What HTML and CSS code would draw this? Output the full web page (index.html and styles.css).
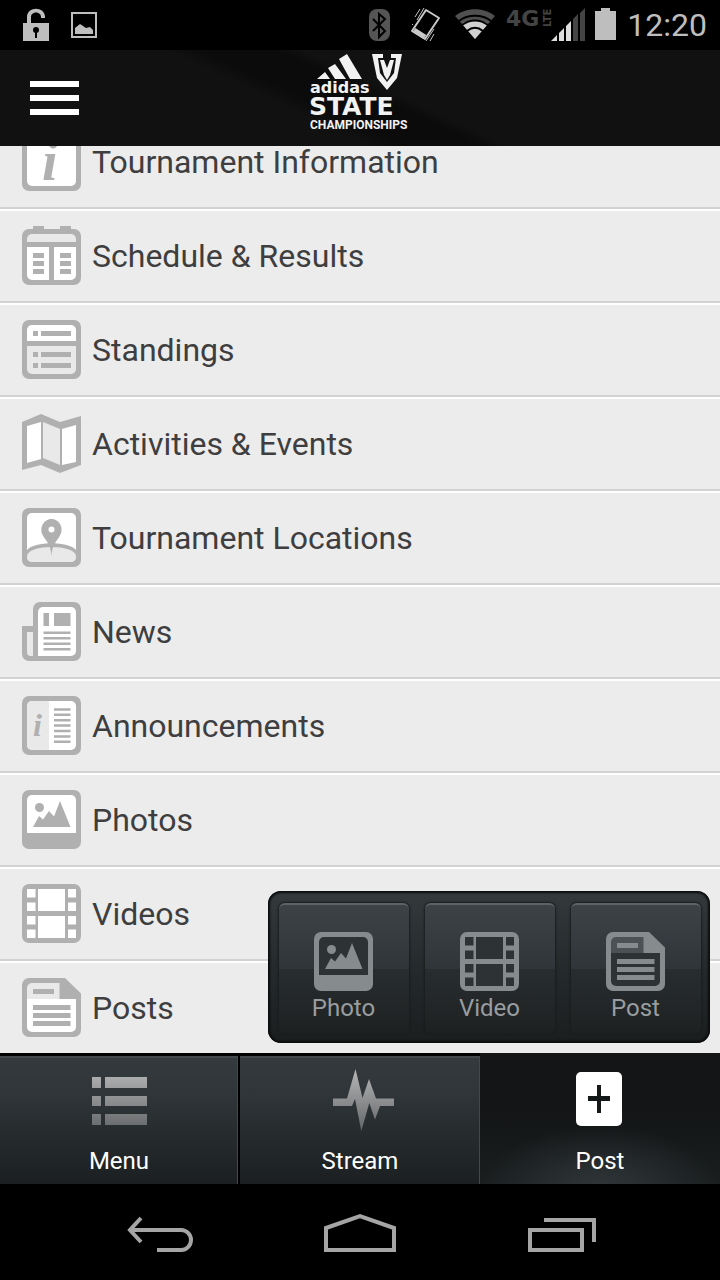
FILE: index.html
```html
<!DOCTYPE html>
<html lang="en">
<head>
<meta charset="utf-8">
<meta name="viewport" content="width=device-width, initial-scale=1">
<title>adidas State Championships</title>
<link rel="stylesheet" href="styles.css">
</head>
<body>
<svg class="sprite" aria-hidden="true">
  <symbol id="i-info" viewBox="0 0 59 59">
    <rect class="fg" width="59" height="59" rx="7"/><rect class="p1" x="5" y="5" width="49" height="49" rx="5"/>
    <text class="fg serif" x="20" y="48" font-size="56">i</text>
  </symbol>
  <symbol id="i-schedule" viewBox="0 0 59 59">
    <path class="fg" d="M11 0h11v3h16V0h11v3h3a7 7 0 0 1 7 7v42a7 7 0 0 1-7 7H7a7 7 0 0 1-7-7V10a7 7 0 0 1 7-7h4z"/>
    <path class="p2" d="M5 16v-3a5 5 0 0 1 5-5h39a5 5 0 0 1 5 5v3z"/>
    <path class="p1" d="M5 21h22v33H10a5 5 0 0 1-5-5zM32 21h22v28a5 5 0 0 1-5 5H32z"/>
    <path class="fg" d="M11 27h11v5H11zm0 8h11v5H11zm0 8h11v5H11zM38 27h11v5H38zm0 8h11v5H38zm0 8h11v5H38z"/>
  </symbol>
  <symbol id="i-standings" viewBox="0 0 59 59">
    <rect class="fg" width="59" height="59" rx="7"/>
    <path class="p1" d="M5 21V10a5 5 0 0 1 5-5h39a5 5 0 0 1 5 5v11z"/>
    <path class="p2" d="M5 26h49v23a5 5 0 0 1-5 5H10a5 5 0 0 1-5-5z"/>
    <path class="fg" d="M11 11h5v5h-5zm8 0h30v5H19zM11 32h5v5h-5zm8 0h30v5H19zM11 43h5v5h-5zm8 0h30v5H19z"/>
  </symbol>
  <symbol id="i-map" viewBox="0 0 59 59">
    <path class="fg" d="M0 8 19 0 38 8 59 2v49l-21 8-19-8-19 5z"/>
    <path class="p1" d="M5 12l14-4v37L5 49zM40 15l14-4v37l-14 3z"/>
    <path class="p2" d="M21 8l17 7v36l-17-7z"/>
  </symbol>
  <symbol id="i-location" viewBox="0 0 59 59">
    <rect class="fg" width="59" height="59" rx="7"/><rect class="p1" x="5" y="5" width="49" height="49" rx="5"/>
    <path class="fg" d="M5 42c7-9 42-9 49 0v8H5z"/>
    <path class="p2" d="M5 48c1-12 48-12 49 0v1a5 5 0 0 1-5 5H10a5 5 0 0 1-5-5z"/>
    <path class="fg" d="M29.500 48c-1-11-3-12-7-18-7-9-1-19 7-19s14 10 7 19c-4 6-6 7-7 18z"/><circle class="p1" cx="29.500" cy="21.500" r="3"/>
  </symbol>
  <symbol id="i-news" viewBox="0 0 59 59">
    <path class="fg" d="M11 24V7a7 7 0 0 1 7-7h34a7 7 0 0 1 7 7v45a7 7 0 0 1-7 7H7a7 7 0 0 1-7-7V24z"/>
    <path class="p2" d="M5 30h6v24H9a4 4 0 0 1-4-4z"/>
    <path class="p1" d="M16 54V10a5 5 0 0 1 5-5h28a5 5 0 0 1 5 5v39a5 5 0 0 1-5 5z"/>
    <path class="fg" d="M21.500 11H27v13h-5.500zM32 11h16.500v13H32zM21.500 29.500h27V32h-27zm0 5.500h27v2.500h-27zm0 5.500h27V43h-27zm0 5.500h27v2.500h-27z"/>
  </symbol>
  <symbol id="i-announce" viewBox="0 0 59 59">
    <rect class="fg" width="59" height="59" rx="7"/><rect class="p1" x="5" y="5" width="49" height="49" rx="5"/>
    <path class="p2" d="M27 5v49H10a5 5 0 0 1-5-5V10a5 5 0 0 1 5-5z"/>
    <text class="fg serif" x="11" y="40" font-size="32">i</text>
    <path class="lines" d="M32 13.500h16.500M32 18.800h16.500M32 24.200h16.500M32 29.600h16.500M32 35h16.500M32 40.400h16.500M32 45.800h16.500"/>
  </symbol>
  <symbol id="i-photo" viewBox="0 0 59 59">
    <rect class="fg" width="59" height="59" rx="7"/>
    <path class="p1" d="M5 43V10a5 5 0 0 1 5-5h39a5 5 0 0 1 5 5v33z"/>
    <circle class="fg" cx="17.500" cy="17.500" r="4.500"/>
    <path class="fg" d="M11 37l6-11 4 3.500L27 21l5 5.500L38 11l10.500 26z"/>
  </symbol>
  <symbol id="i-video" viewBox="0 0 59 59">
    <rect class="fg" width="59" height="59" rx="7"/>
    <path class="p1" d="M5 5h8.500v8.500H5zM5 18.500h8.500V27H5zM5 32h8.500v8.500H5zM5 45.500h8.500V54H5zM46 5h8v8.500h-8zM46 18.500h8V27h-8zM46 32h8v8.500h-8zM46 45.500h8V54h-8zM16 5h27v22H16zM16 32h27v22H16z"/>
  </symbol>
  <symbol id="i-post" viewBox="0 0 59 59">
    <path class="fg" d="M7 0h36l16 15.500V52a7 7 0 0 1-7 7H7a7 7 0 0 1-7-7V7a7 7 0 0 1 7-7z"/>
    <path class="p2" d="M10 5h27.500v16H5V10a5 5 0 0 1 5-5z"/>
    <path class="p1" d="M5 21h49v28a5 5 0 0 1-5 5H10a5 5 0 0 1-5-5z"/>
    <path class="fg" d="M11 11h21v5H11zM11 27h37.500v5H11zm0 8h37.500v5H11zm0 8h37.500v5H11z"/>
  </symbol>
</svg>

<div class="screen">
  <div class="status">
    <svg width="26" height="50" viewBox="0 0 26 50"><path d="M0 23h4v-6C4 6 22 6 22 17v1h-4v-1c0-6-10-6-10 0v6h18v18H0z" fill="#bebebe"/><circle cx="13" cy="30" r="3" fill="#000"/><path d="M12 31h2v7h-2z" fill="#000"/></svg>
    <svg width="26" height="50" viewBox="0 0 26 50"><rect x="1" y="13" width="24" height="24" fill="none" stroke="#bebebe" stroke-width="2"/><path d="M4 34v-6l5-4 6 4 4-1 3 3v4z" fill="#bebebe"/></svg>
    <div class="status-right">
      <svg width="22" height="50" viewBox="0 0 22 50"><rect y="9" width="21" height="32" rx="8" fill="#555"/><path d="M4 19l12 12-6 6V14l6 5L4 31" fill="none" stroke="#000" stroke-width="2"/></svg>
      <svg width="44" height="50" viewBox="0 0 44 50"><g fill="none" stroke="#c8c8c8"><path d="M25 10l13 8-14 21-13-8z" stroke-width="2" stroke-linejoin="round"/><path d="M13 30l11 7" stroke-width="5"/><path d="M14 17l5-8M16 20l7-12M12 24l-1 1M25 41l8-12M29 41l4-7" stroke-width="1"/></g></svg>
      <svg width="40" height="50" viewBox="0 0 40 50"><path d="M20 39 0 16c11-9 29-9 40 0z" fill="#505050"/><path d="M20 39 7 24c8-5 18-5 26 0z" fill="#d0d0d0"/><path d="M4 21c9-7 23-7 32 0M7 25c8-6 18-6 26 0M12 31c5-4 11-4 16 0" fill="none" stroke="#000" stroke-width="2"/></svg>
      <svg width="80" height="50" viewBox="0 0 80 50" role="img" aria-label="4G LTE signal"><text class="net" x="1" y="26" font-size="22">4G</text><text class="net" transform="translate(46 27) rotate(-90)" font-size="10">LTE</text><path d="M46 41l6-6v6zM54 33l5-5v13h-5zM61 26l5-5v20h-5z" fill="#dedede"/><path d="M68 19l5-5v27h-5zM75 13l5-5v33h-5z" fill="#444"/></svg>
      <svg width="22" height="50" viewBox="0 0 22 50"><path d="M0 11h6V8h9v3h6v29H0z" fill="#bebebe"/></svg>
      <span class="clock">12:20</span>
    </div>
  </div>

  <header class="header">
    <button class="burger" aria-label="Open menu"><span></span><span></span><span></span></button>
    <svg class="logo" width="104" height="96" viewBox="0 0 104 96" role="img" aria-label="adidas State Championships">
      <g fill="#f2f2f2">
        <path d="M9 29l8-7 5 7zM20 18l7-4 11 15H27zM31 9l8-5 15 25H42z"/>
        <path d="M64 4h11v4h-5l2 15 7 9 7-9 2-15h-5V4h11l-5 24-10 12-10-12z"/>
        <path d="M72 10h4l3 8 3-8h4l-4 15-3 5-3-5z"/>
        <text class="brand" x="2" y="43" font-size="16">adidas</text>
        <text class="brand" x="1" y="65" font-size="25">STATE</text>
        <text class="caps" x="2" y="79" font-size="12">CHAMPIONSHIPS</text>
      </g>
    </svg>
  </header>

  <main class="content">
    <nav class="list" aria-label="Sections">
      <a class="row" href="#info"><svg class="icon"><use href="#i-info"/></svg>Tournament Information</a>
      <a class="row" href="#schedule"><svg class="icon"><use href="#i-schedule"/></svg>Schedule &amp; Results</a>
      <a class="row" href="#standings"><svg class="icon"><use href="#i-standings"/></svg>Standings</a>
      <a class="row" href="#activities"><svg class="icon"><use href="#i-map"/></svg>Activities &amp; Events</a>
      <a class="row" href="#locations"><svg class="icon"><use href="#i-location"/></svg>Tournament Locations</a>
      <a class="row" href="#news"><svg class="icon"><use href="#i-news"/></svg>News</a>
      <a class="row" href="#announcements"><svg class="icon"><use href="#i-announce"/></svg>Announcements</a>
      <a class="row" href="#photos"><svg class="icon"><use href="#i-photo"/></svg>Photos</a>
      <a class="row" href="#videos"><svg class="icon"><use href="#i-video"/></svg>Videos</a>
      <a class="row" href="#posts"><svg class="icon"><use href="#i-post"/></svg>Posts</a>
    </nav>
    <div class="popup">
      <button class="action"><svg class="icon"><use href="#i-photo"/></svg>Photo</button>
      <button class="action"><svg class="icon"><use href="#i-video"/></svg>Video</button>
      <button class="action"><svg class="icon"><use href="#i-post"/></svg>Post</button>
    </div>
  </main>

  <div class="tabs">
    <button class="tab">
      <svg width="64" height="64" viewBox="0 0 64 64"><defs><linearGradient id="fade" gradientUnits="userSpaceOnUse" x1="0" y1="2" x2="0" y2="60"><stop offset="0" stop-color="#b4b4b5"/><stop offset="1" stop-color="#66696b"/></linearGradient></defs><path fill="url(#fade)" d="M5 8h9v11H5zm13 0h42v11H18zM5 27h9v10H5zm13 0h42v10H18zM5 45h9v11H5zm13 0h42v11H18z"/></svg>
      Menu
    </button>
    <button class="tab">
      <svg width="64" height="64" viewBox="0 0 64 64"><path fill="url(#fade)" d="M5 29.500h14L27.500 0l7 29L41 10l7 19.500h18V37H52l-5 13.500L41.300 34l-8 28L27 30l-3 7H5z"/></svg>
      Stream
    </button>
    <button class="tab active" aria-pressed="true">
      <svg width="64" height="64" viewBox="0 0 64 64"><rect x="8" y="3" width="46" height="54" rx="5" fill="#fff"/><path d="M29 16h4v11h9v5h-9v12h-4V32h-9v-5h9z" fill="#151819"/></svg>
      Post
    </button>
  </div>

  <div class="system">
    <button aria-label="Back"><svg width="72" height="40" viewBox="0 0 72 40"><path d="M17 5 6 17l11 12M5 17h52a10 10 0 0 1 0 20H33"/></svg></button>
    <button aria-label="Home"><svg width="72" height="40" viewBox="0 0 72 40"><path d="M2 15 36 3l34 12v22H2z"/></svg></button>
    <button aria-label="Recent apps"><svg width="72" height="40" viewBox="0 0 72 40"><path d="M6 17h52v20H6zM20 7h50v22"/></svg></button>
  </div>
</div>
</body>
</html>
```
FILE: styles.css
```css
* { box-sizing: border-box; }
body { margin: 0; background: #000; font-family: Roboto, "Noto Sans", sans-serif; }
button { margin: 0; padding: 0; border: 0; background: none; color: inherit; font: inherit; cursor: pointer; }
svg { display: block; flex: none; overflow: visible; }
.sprite { position: absolute; width: 0; height: 0; }
.screen { display: flex; flex-direction: column; height: 100vh; overflow: hidden; }

.status { flex: none; display: flex; align-items: center; gap: 22px; height: 50px; padding: 0 13px 0 23px; background: #000; }
.status-right { display: flex; align-items: center; gap: 10px; margin-left: auto; }
.clock { color: #bebebe; font-size: 32px; line-height: 50px; }
.net { fill: #444; font-family: "DejaVu Sans", sans-serif; font-weight: bold; }

.header {
  flex: none; display: grid; grid-template-columns: 1fr auto 1fr; align-items: center; height: 96px; padding: 0 30px;
  background: linear-gradient(205deg, transparent 45%, #0b0b0b 48%, #0b0b0b 56%, transparent 60%), #111;
}
.burger { display: grid; gap: 8px; width: 49px; }
.burger span { height: 6px; background: #fff; }
.brand { font-family: "DejaVu Sans", sans-serif; font-weight: bold; }
.caps { font-family: Roboto, sans-serif; font-weight: bold; }

.content { position: relative; flex: 1; min-height: 0; }
.list { display: flex; flex-direction: column; justify-content: flex-end; height: 100%; overflow: hidden; background: #ececec; }
.row {
  flex: none; display: flex; align-items: center; gap: 11px; height: 94px; padding: 0 22px 1px;
  border-top: 2px solid #fff; border-bottom: 2px solid #d2d2d2;
  color: #3e3e40; font-size: 32px; text-decoration: none;
}
.row:last-child { height: 92px; border-bottom: 0; }
.icon { width: 59px; height: 59px; --fg: #b0b0b0; --p1: #fff; --p2: #e9e9e9; }
.fg { fill: var(--fg); }
.p1 { fill: var(--p1); }
.p2 { fill: var(--p2); }
.lines { stroke: var(--fg); stroke-width: 2.5; }
.serif { font-family: "Liberation Serif", serif; font-style: italic; font-weight: bold; }

.popup {
  position: absolute; right: 10px; bottom: 10px; display: flex; gap: 16px; padding: 12px 9px 10px 11px;
  border-radius: 13px; background: linear-gradient(#34393c, #252a2c 50%, #1b1e1f);
  box-shadow: inset 0 0 2px 2px #0b0d0e;
}
.action {
  display: flex; flex-direction: column; align-items: center; gap: 2px; width: 130px; height: 130px; padding: 27px 1px 0 0;
  border-top: 2px solid #5c6265; border-radius: 6px;
  background: linear-gradient(#3c4245, #2f3538 50%, #282d2f 50%, #1e2122);
  box-shadow: 0 0 2px 1px #1a1d1e; color: #999d9f; font-size: 24px; line-height: 30px;
}
.action .icon { --fg: #868b8e; --p1: #2d3235; --p2: #4b5154; }

.tabs { flex: none; display: grid; grid-template-columns: repeat(3, 1fr); height: 131px; background: #000; }
.tab {
  display: flex; flex-direction: column; align-items: center; gap: 12px; padding-top: 13px;
  border-top: 3px solid #000; border-right: 2px solid #000;
  background: linear-gradient(#343b3e, #2f3538 30%, #1b1f21);
  box-shadow: inset -1px 2px 0 #42484b; color: #fff; font-size: 24px; line-height: 32px;
}
.tab + .tab { border-right: 0; }
.tab.active { border-top-color: #131516; background: radial-gradient(ellipse 50% 50% at 50% 105%, #31373a, transparent), linear-gradient(#131516 40%, #1a1e1f); box-shadow: none; }

.system { flex: none; display: flex; justify-content: center; gap: 128px; height: 96px; padding-top: 2px; background: #000; }
.system path { fill: none; stroke: #a5a5a5; stroke-width: 4; }
```
